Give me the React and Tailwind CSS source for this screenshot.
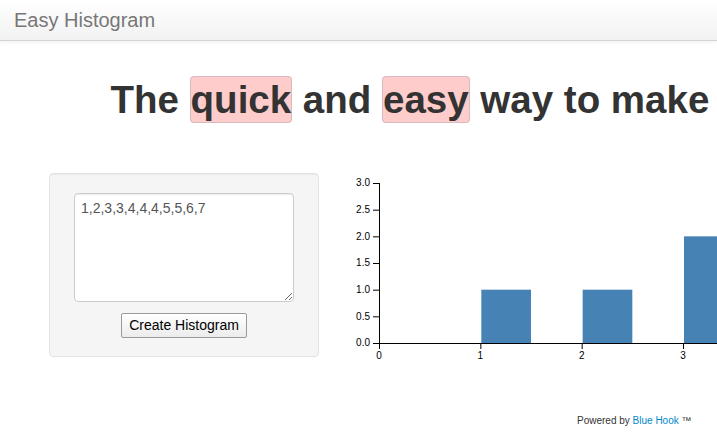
import React from "react";

const values = [1, 2, 3, 3, 4, 4, 4, 5, 5, 6, 7];

// chart scale (pixels per unit)
const UX = 101.33;
const UY = 53.33;
const OX = 39;
const OY = 170;
const W = 377;

const bins = [1, 2, 3, 4, 5, 6, 7].map((v) => ({
  x: v,
  y: values.filter((d) => d === v).length,
}));

function Histogram() {
  const yTicks = [0, 0.5, 1, 1.5, 2, 2.5, 3];
  // only the ticks that fit in the visible width
  const xTicks = [0, 1, 2, 3, 4, 5, 6, 7, 8].filter((t) => OX + t * UX + 6 < W);
  return (
    <svg width={W} height="200" className="shrink-0 block" style={{ fontFamily: "'Liberation Sans', Arial, sans-serif" }}>
      {bins.map((b) => (
        <rect
          key={b.x}
          x={OX + b.x * UX + 1}
          y={OY - b.y * UY}
          width={UX / 2 - 1}
          height={b.y * UY}
          fill="#4682b4"
        />
      ))}
      {/* y axis */}
      <line x1={OX + 0.5} y1={OY - 3 * UY} x2={OX + 0.5} y2={OY} stroke="#000" />
      {yTicks.map((t) => (
        <g key={t}>
          <line x1={OX - 6} x2={OX} y1={OY - t * UY + 0.5} y2={OY - t * UY + 0.5} stroke="#000" />
          <text x={OX - 9} y={OY - t * UY} dy="0.32em" textAnchor="end" fontSize="10" fill="#000">
            {t.toFixed(1)}
          </text>
        </g>
      ))}
      {/* x axis */}
      <line x1={OX} y1={OY + 0.5} x2={W} y2={OY + 0.5} stroke="#000" />
      {xTicks.map((t) => (
        <g key={t}>
          <line x1={OX + t * UX + 0.5} x2={OX + t * UX + 0.5} y1={OY} y2={OY + 6} stroke="#000" />
          <text x={OX + t * UX} y={OY + 9} dy="0.71em" textAnchor="middle" fontSize="10" fill="#000">
            {t}
          </text>
        </g>
      ))}
    </svg>
  );
}

export default function App() {
  return (
    <div className="w-full min-h-[443px] overflow-hidden bg-white font-['Liberation_Sans',Arial,sans-serif]">
      {/* Navbar */}
      <div className="h-[41px] bg-gradient-to-b from-white to-[#f2f2f2] border-b border-[#d4d4d4] shadow-[0_1px_4px_rgba(0,0,0,0.065)]">
        <div className="pl-[14px] pt-[10px] text-[20px] leading-[20px] text-[#777]">Easy Histogram</div>
      </div>

      <div className="ml-[49px] w-[940px]">
        <h1 className="mt-[39px] text-center text-[38.5px] leading-[40px] font-bold text-[#333] whitespace-nowrap">
          The{" "}
          <span className="bg-[#ffcccc] border border-[#d6bcbc] rounded-[4px] py-px">quick</span> and{" "}
          <span className="bg-[#ffcccc] border border-[#d6bcbc] rounded-[4px] py-px">easy</span> way to make histograms
        </h1>

        <div className="mt-[53px] flex items-start">
          <div className="w-[270px] shrink-0 bg-[#f5f5f5] border border-[#e3e3e3] rounded-[4px] pt-[19px] pb-[18px] flex flex-col items-center shadow-[inset_0_1px_1px_rgba(0,0,0,0.05)]">
            <textarea
              defaultValue="1,2,3,3,4,4,4,5,5,6,7"
              className="block w-[220px] h-[109px] bg-white border border-[#ccc] rounded-[4px] px-[6px] py-[4px] text-[14px] leading-[20px] text-[#555] shadow-[inset_0_1px_1px_rgba(0,0,0,0.075)] resize outline-none"
            />
            <button className="mt-[11px] h-[25px] px-[7px] border border-[#9a9a9a] rounded-[2px] bg-gradient-to-b from-white to-[#ececec] text-[14px] leading-[17px] text-black">
              Create Histogram
            </button>
          </div>
          <div className="ml-[21px]">
            <Histogram />
          </div>
        </div>

        <div className="mt-[38px] pl-[528px] text-[10px] leading-[20px] text-[#333] whitespace-nowrap">
          Powered by <span className="text-[#0088cc]">Blue Hook</span> ™
        </div>
      </div>
    </div>
  );
}
